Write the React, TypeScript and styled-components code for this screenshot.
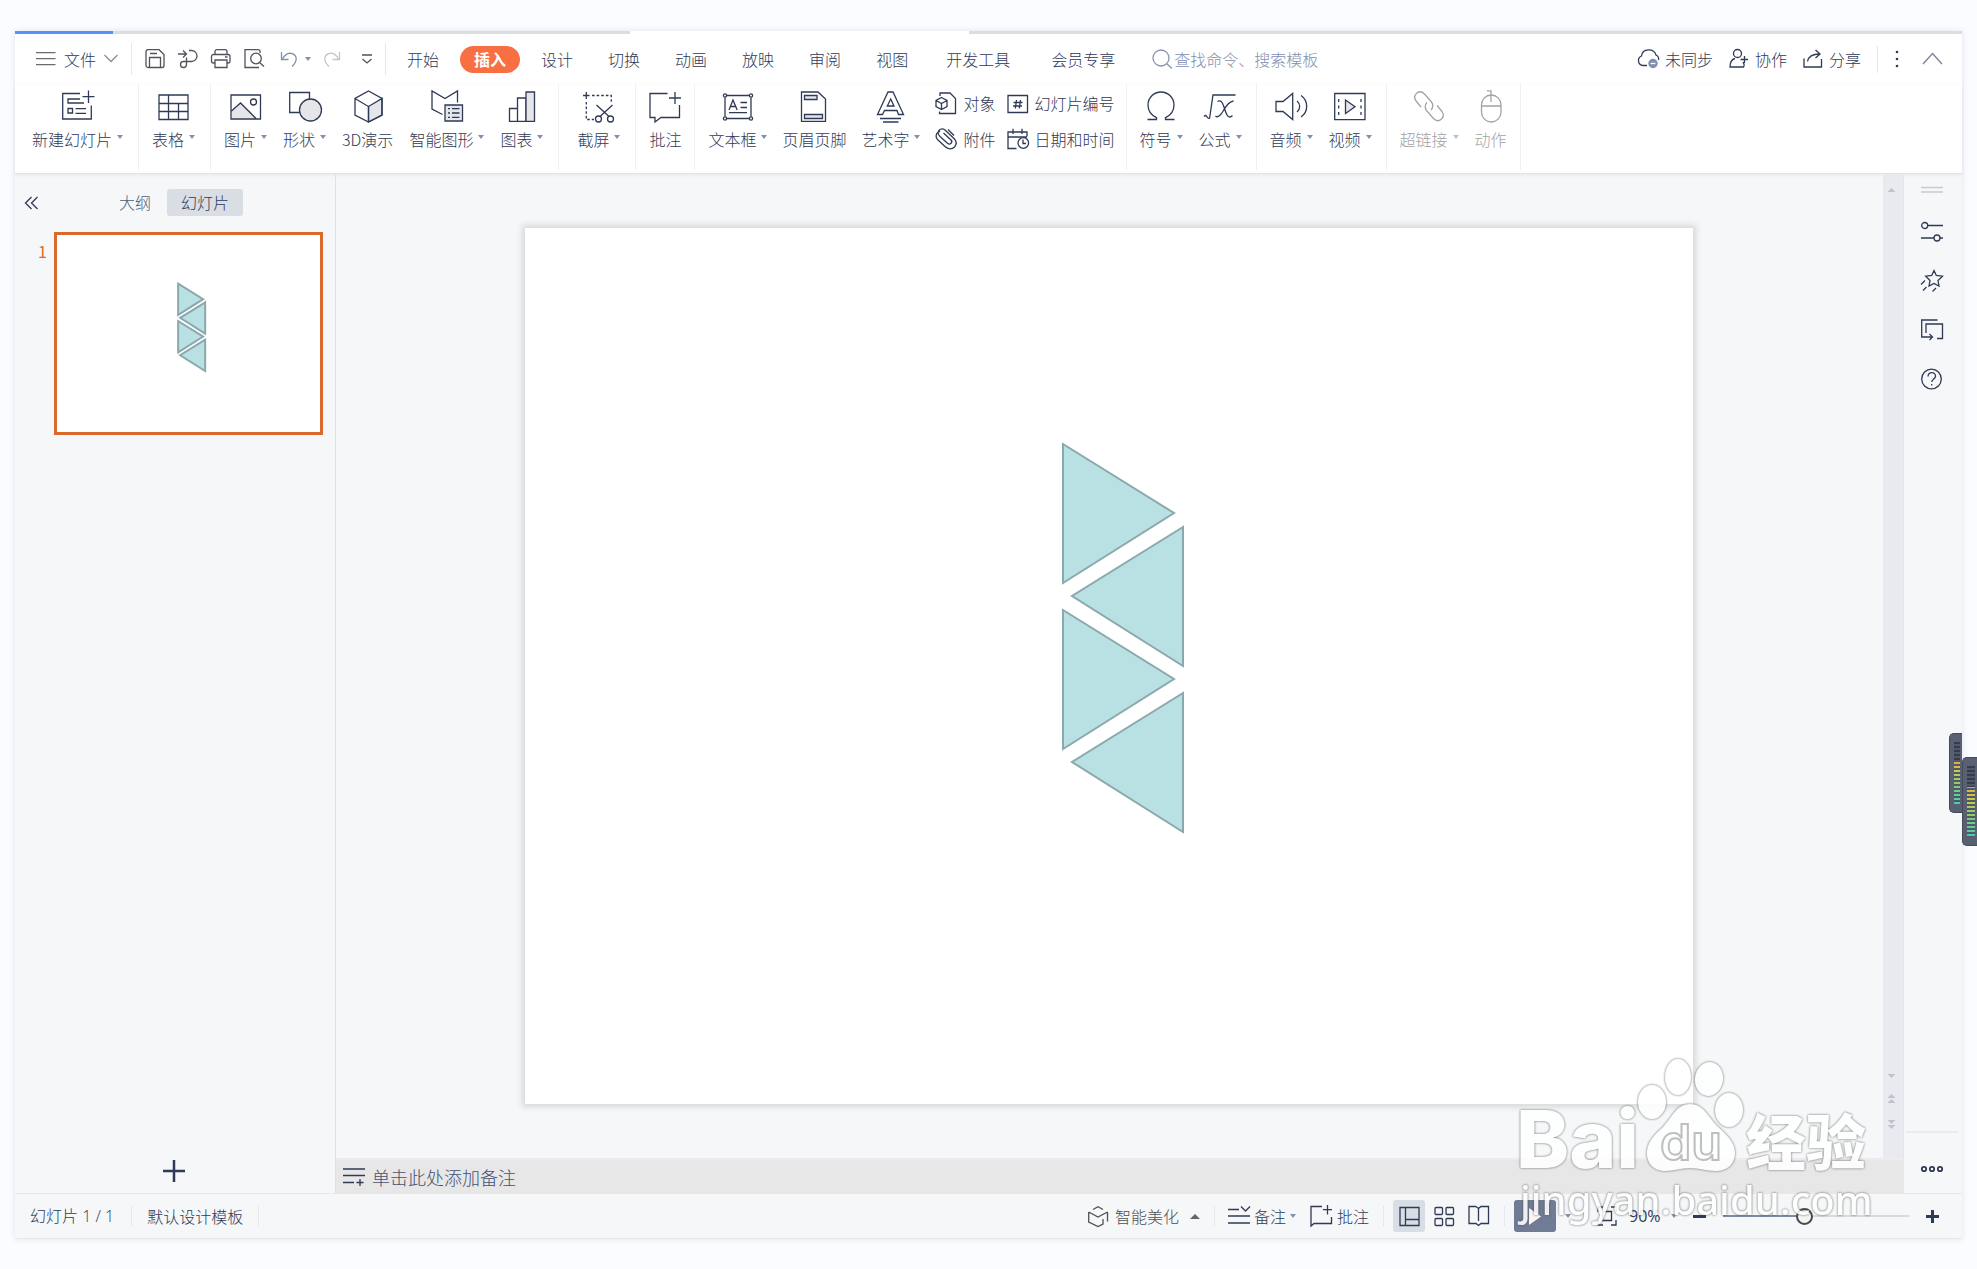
import React from "react";
import styled, { createGlobalStyle, css } from "styled-components";

const ink = "#2f3a56";
const muted = "#8290b0";
const line = "#e6e8ec";
const panel = "#f5f7f9";
const shade = "#e4e6ea";

const GlobalStyle = createGlobalStyle`
  *, *::before, *::after { box-sizing: border-box; }
  body {
    margin: 0;
    background: #fbfcff;
    color: ${ink};
    font: 300 16px/24px "Noto Sans CJK SC", "Open Sans", sans-serif;
  }
  button, input, select, textarea {
    margin: 0;
    padding: 0;
    border: 0;
    background: none;
    color: inherit;
    font: inherit;
  }
  button { cursor: pointer; }
`;

/* ---------- icons ---------- */

const Glyph = styled.svg`
  display: block;
  flex: none;
  overflow: visible;
  fill: none;
  stroke: currentColor;
  stroke-width: 1.3;
`;

const drawings: Record<string, React.ReactNode> = {
  newSlide: (
    <>
      <path d="M18 3.5H.7V29H29.3V15.5M26.5 .5V13M20.5 6.7H32.5" />
      <path d="M18 9H6V13H22M13.5 18.7H24M13.5 23.3H24M6 18.5h4.5v4.5H6z" />
    </>
  ),
  table: <path d="M1 5H30V29.5H1zM1 13.5H30M1 21.5H30M10.5 5V29.5M20.5 13.5V29.5" />,
  picture: (
    <>
      <path d="M1.5 21 10.5 13 26 28.5H1.5z" fill={shade} stroke="none" />
      <path d="M1 5H30.5V29H1zM1.5 21 10.5 13 26 28.5" />
      <circle cx="23.5" cy="12" r="3" />
    </>
  ),
  shapes: (
    <>
      <path d="M.7 2.5H20.5V22.5H.7z" />
      <circle cx="21.5" cy="20" r="11" fill={shade} />
    </>
  ),
  cube: (
    <>
      <path d="M16.5 16.5 30 8.5V25L16.5 32z" fill={shade} />
      <path d="M16.5 1 30 8.5V25L16.5 32 3 25V8.5zM3 8.5 16.5 16.5V32" />
    </>
  ),
  smart: (
    <>
      <path d="M11.5 24.5 1 19V1L14 8.5 26.5 1V12.5" />
      <path d="M14 15H31.5V31H14z" fill={shade} />
      <path d="M17 18.7h2M21 18.7h7.500M17 23h2M21 23h7.500M17 27.300h2M21 27.300h7.500" />
    </>
  ),
  chart: (
    <>
      <path d="M3.500 18.500H11.500V31.300H3.500zM11.500 8H20V31.300H11.500z" />
      <path d="M20 2H28.500V31.300H20z" fill={shade} />
    </>
  ),
  snip: (
    <>
      <path d="M0 5.500H6.500M3.300 2V9" />
      <path d="M9 5.500H28.300V12.500M3.300 12V29.500H11" strokeDasharray="2.600 2" />
      <path d="M13.500 15 26 26.500M29.500 15 17 26.500" />
      <circle cx="15.500" cy="29" r="3" />
      <circle cx="27.500" cy="29" r="3" />
    </>
  ),
  comment: <path d="M18.500 3.500H1V27.500H6V32L12 27.500H30.500V15M26 2V14M20 8H32" />,
  textBox: (
    <>
      <path d="M5 5.500H27M5 28.500H27M3 7.500V26.500M29 7.500V26.500M18.500 12.500H25M18.500 17.500H25M7 22.700H25" />
      <path d="M7 20 11 10 15.200 20M8.500 16.500H13.800" />
      {[[3, 5.5], [29, 5.5], [3, 28.5], [29, 28.5]].map(([x, y]) => (
        <circle key={`${x}-${y}`} cx={x} cy={y} r="1.600" />
      ))}
    </>
  ),
  headerFooter: (
    <>
      <path d="M3.500 2H20L27.500 9V31.300H3.500z" />
      <path d="M6.500 5.500h12.500v4H6.500zM6.500 24.500h18v4H6.500z" fill={shade} />
    </>
  ),
  wordArt: (
    <>
      <path d="M13 2H18L28.500 24.500H23.500L22 20.500H9.500L7.500 24.500H2.500z" />
      <path d="M15.700 9 19 16H12.300zM5 28.500H26M8 32H23.500" />
    </>
  ),
  object: (
    <>
      <path d="M5 4V1H15L20.500 6.500V21.500H4.500V19.500" />
      <path d="M6.500 5.500 12 8.500V14.500L6.500 17.500 1 14.500V8.500zM1 8.500 6.500 11.500 12 8.500M6.500 11.500V17.500" />
    </>
  ),
  attach: (
    <path d="M5 3 1.800 5.500C.500 8 1 10 3 12L10 18.500C13 21.500 17 21.500 19.500 19 22 16 21.500 13 19 10.500L10 2C8 .500 5.500 .700 4 2.500 2.500 4.500 3 6.500 5 8.500L12.500 15.300C13.500 16.300 15 16.300 16 15.300 17 14.300 17 13 16 12L8.500 5M13 1.500 19 7.500" />
  ),
  number: (
    <path d="M1 3.500H20.500V20.500H1zM9.500 8 8.300 16.500M13.500 8 12.300 16.500M6.500 10.500H15.500M6 14H15" />
  ),
  calendar: (
    <>
      <path d="M9.500 20.500H1V4H20V8.500M1 9H20M6 .700V6M15 .700V6" />
      <circle cx="16.300" cy="15" r="5.300" />
      <path d="M16 11.500V15.500H19" />
    </>
  ),
  omega: (
    <path d="M2.500 29.500H11.500V27.700C6 25 3 21 3 15A13 13 0 0 1 29 15C29 21 26 25 20.500 27.700V29.500H29.500" />
  ),
  formula: (
    <path d="M0 26.500C1.500 25 2 25 3.500 27.500 4.500 29 5.500 28.500 5.700 27.500L9 5H31.500M13.500 11.500C17 9.500 18.500 12 20.500 18.500S24.500 29.500 28.500 25.500M29.500 11C24 12 21.500 17 19.500 20.500S14 28.500 11.500 26" />
  ),
  audio: (
    <path d="M1 11.500H8L17.700 3.500V29.500L8 21.500H1zM22 11A7 7 0 0 1 22 22M26 5.500A13 13 0 0 1 26 27" />
  ),
  video: (
    <>
      <path d="M.700 3.500H31V29.700H.700zM4.700 9v3M4.700 15.500v3M4.700 22v3M27 9v3M27 15.500v3M27 22v3" />
      <path d="M11.500 10 21 16.700 11.500 23.500z" fill={shade} />
    </>
  ),
  link: (
    <>
      <path d="M8 17 3 11C1 8 1.500 5 4 3 6.500 1 9.500 2 11.500 4L18.500 12C20.500 14.500 20 18 18 20" />
      <path d="M24 15.500 29 21.500C31 24.500 30.500 27.500 28 29.500 25.500 31.500 22.500 30.500 20.500 28.500L13.500 20.500C11.500 18 12 14.500 14 12.500" />
    </>
  ),
  mouse: (
    <>
      <rect x="6.500" y="5" width="19.500" height="27" rx="9.750" />
      <path d="M6.500 16H26M12 .800H16V12" />
    </>
  ),
  menu: <path d="M0 3.700H19.500M0 9.700H19.500M0 15.700H19.500" stroke="#6b6b6b" />,
  chevronDown: <path d="M.500 3 7 9.500 13.500 3" stroke="#8c8c8c" />,
  save: (
    <path d="M3 .700H14L19 5.500V16.500A2 2 0 0 1 17 18.500H3A2 2 0 0 1 1 16.500V2.700A2 2 0 0 1 3 .700zM4.500 18V8.500H15.500V18M5 4.500H12" />
  ),
  exportFile: (
    <path d="M0 5H8M5 1.500 8.500 5 5 8.500M11 1.500H13.500A5.500 5.500 0 0 1 13.500 12.500H5.500A3 3 0 1 0 8.500 15.500V8.500" />
  ),
  print: (
    <path d="M4 5.500V2.700A2 2 0 0 1 6 .700H14A2 2 0 0 1 16 2.700V5.500M4 14H2.500A2 2 0 0 1 .500 12V7.500A2 2 0 0 1 2.500 5.500H17A2 2 0 0 1 19 7.500V12A2 2 0 0 1 17 14H16M4 11H16V18.500H4zM14 8H16.500" />
  ),
  preview: (
    <>
      <path d="M16 4V2.500A1.800 1.800 0 0 0 14.200 .700H1V18.500H15" />
      <circle cx="12" cy="9.500" r="5.300" />
      <path d="M15.500 13.500 20 17.500" />
    </>
  ),
  undo: <path d="M1.500 3V10.500H8.500M2 10.500C5 5 9 3.500 12.500 4.700 17.500 7 17.500 12.500 12 17.500" />,
  redo: <path d="M15.500 3V10.500H8.500M15 10.500C12 5 8 3.500 4.500 4.700-.500 7-.500 12.500 5 17.500" />,
  more: <path d="M0 6H10M.500 10 5 14 9.500 10" />,
  search: (
    <>
      <circle cx="9" cy="9" r="8" />
      <path d="M14.500 14.500 20 19.500" />
    </>
  ),
  cloud: (
    <>
      <path d="M10 16.500H5.500A5 5 0 0 1 4.500 7C5.500 -1 17 -1 19 6 21 7 22 9 21.500 11" />
      <circle cx="16" cy="14.500" r="4.700" fill={muted} stroke="none" />
      <path d="M13.700 14.500H18.300" stroke="#fff" />
    </>
  ),
  person: (
    <>
      <circle cx="8.500" cy="4.500" r="4" />
      <path d="M6 9.500C2 10.500 1 13 1 18H14.500C15.500 16.500 15 14.500 14 13M11.500 10.500H19M15.500 7V14" />
    </>
  ),
  share: <path d="M1 9.500V18H18.500V10M4.500 12.500C5.500 7 9 5 16.500 5M12.500 1 17 5 12.500 9" />,
  dots: (
    <g fill="currentColor" stroke="none">
      <circle cx="3" cy="2" r="1.300" />
      <circle cx="3" cy="9" r="1.300" />
      <circle cx="3" cy="16" r="1.300" />
    </g>
  ),
  chevronUp: <path d="M1 15 10.500 4.500 20 15" stroke="#7a8296" />,
  collapse: <path d="M7.500 1 1.500 7 7.500 13M13.500 1 7.500 7 13.500 13" />,
  plus: <path d="M11 0V22M0 11H22" strokeWidth="2.500" />,
  notes: <path d="M0 2H22M0 8.500H22M0 15.500H11M13.500 15.500H20.500M17 12V19" />,
  grip: <path d="M0 8.500H22M0 13H22" stroke="#c9cbd0" />,
  tune: (
    <>
      <path d="M7 4.500H22M0 17H13M19 17H22" />
      <circle cx="3.700" cy="4.500" r="3" />
      <circle cx="16" cy="17" r="3" />
    </>
  ),
  star: (
    <path d="M13 .500 15.300 5.500 21.500 6.200 17 10.500 18 16 13 13.500 8 16 9 10.500 4.700 6.200 10.700 5.500zM4 10.500 0 14.500M5.500 17 2 20.500M15 18 11.500 21.500" />
  ),
  swap: <path d="M16.500 1H.700V18H11M8.500 15 11.500 18 8.500 21M5 14V5H21.500V19.500H16" />,
  help: (
    <>
      <circle cx="10.500" cy="11" r="9.800" />
      <path d="M7 8.500C7 3 15 3.500 14.500 8.500 14 11 11 11 10.700 14M10.700 16V17.500" />
    </>
  ),
  ellipsis: (
    <>
      <circle cx="3" cy="11" r="2.200" strokeWidth="1.800" />
      <circle cx="11" cy="11" r="2.200" strokeWidth="1.800" />
      <circle cx="19" cy="11" r="2.200" strokeWidth="1.800" />
    </>
  ),
  beautify: (
    <path d="M5 3.500 10 .700 15 3.500M.700 6 10 11 19.500 6M.700 6V16L10 20.500 15 18V13M19.500 6V15.500" />
  ),
  notesToggle: <path d="M0 4.500H11M13 1.500 17.500 6 22 1.500M0 11H22M0 18H22" />,
  reviewNote: <path d="M12 1.500H1V21L4 18.500H21.500V12M17.500 0V9.500M13 4.700H22" />,
  viewNormal: <path d="M1 1.500H20V19.500H1zM6.500 1.500V19.500M6.500 13.500H20" />,
  viewGrid: (
    <>
      {[1, 12].map((x) =>
        [1.5, 12.5].map((y) => <rect key={`${x}-${y}`} x={x} y={y} width="7.500" height="7" rx="1" />)
      )}
    </>
  ),
  viewRead: <path d="M8 1.500H1V18.500H8L10.500 20.500 13 18.500H20.500V1.500H13L10.500 3.500 8 1.500M10.500 3.500V16" />,
  play: <path d="M1 1 13 9.500 1 18z" fill="#fdf6f3" stroke="none" />,
  fit: <path d="M1 6V1H6M14 1H19V6M19 14V19H14M6 19H1V14M5.500 5.500H14.500V14.500H5.500z" />,
  minus: <path d="M0 6.500H13" strokeWidth="3" />,
  zoomIn: <path d="M0 6.500H13M6.500 0V13" strokeWidth="3" />,
};

function Icon({ name, w, h = w }: { name: string; w: number; h?: number }) {
  return (
    <Glyph width={w} height={h} viewBox={`0 0 ${w} ${h}`} aria-hidden="true">
      {drawings[name]}
    </Glyph>
  );
}

/* ---------- shared parts ---------- */

const Caret = styled.span<{ $up?: boolean; $tone?: string }>`
  flex: none;
  width: 0;
  height: 0;
  border: 3px solid transparent;
  ${(p) =>
    p.$up
      ? css`margin-left: 4px; border-width: 5px; border-top: 0; border-bottom-color: ${p.$tone ?? muted};`
      : css`border-bottom: 0; border-top: 4px solid ${p.$tone ?? muted};`}
`;

const Rule = styled.span<{ $h: number }>`
  flex: none;
  width: 1px;
  height: ${(p) => p.$h}px;
  background: ${line};
`;

const Page = styled.div`
  position: relative;
  display: flex;
  min-height: 100vh;
  padding: 31px 15px 30px;
  overflow: hidden;
`;

const Window = styled.div`
  flex: 1;
  min-width: 0;
  display: flex;
  flex-direction: column;
  background: ${panel};
  border-bottom: 1px solid ${line};
  box-shadow: 0 0 6px rgba(40, 50, 80, 0.12);
`;

const TabStrip = styled.div`
  display: grid;
  grid-template-columns: 98fr 517fr 339fr 993fr;
  height: 3px;
`;

const StripPart = styled.span<{ $tone: string }>`
  background: ${(p) => p.$tone};
`;

/* ---------- menu bar ---------- */

const MenuBar = styled.header`
  display: flex;
  align-items: center;
  height: 50px;
  padding: 0 20px 0 21px;
  background: #fff;
`;

const FileButton = styled.button`
  display: flex;
  align-items: center;
  gap: 8px;
  margin-right: 13px;
`;

const QuickTools = styled.div`
  display: flex;
  align-items: center;
  gap: 13px;
  padding: 0 13px;
  color: #50535a;
`;

const QuickButton = styled.button<{ $tone?: string }>`
  display: flex;
  align-items: center;
  gap: 7px;
  color: ${(p) => p.$tone ?? "inherit"};
`;

const UndoButton = styled(QuickButton)`
  margin-left: 3px;
`;

const MoreButton = styled(QuickButton)`
  margin-left: 8px;
`;

const Tabs = styled.nav`
  display: flex;
  gap: 7px;
  padding-left: 7px;
`;

const Tab = styled.button<{ $active?: boolean; $wide?: boolean }>`
  height: 27px;
  padding: 0 ${(p) => (p.$wide ? 17 : 14)}px;
  border-radius: 14px;
  line-height: 27px;
  white-space: nowrap;
  ${(p) => p.$active && css`background: #f76f43; color: #fff; font-weight: 700;`}
`;

const Search = styled.label`
  display: flex;
  align-items: center;
  gap: 2px;
  margin-left: 20px;
  color: #8794b1;
`;

const SearchInput = styled.input`
  width: 180px;
  outline: 0;
  &::placeholder { color: #8290b0; opacity: 1; }
`;

const Account = styled.div`
  display: flex;
  align-items: center;
  gap: 16px;
  margin-left: auto;
`;

const AccountButton = styled.button`
  display: flex;
  align-items: center;
  gap: 6px;
  white-space: nowrap;
`;

const CollapseRibbon = styled(AccountButton)`
  margin-left: 6px;
`;

/* ---------- ribbon ---------- */

const Ribbon = styled.div`
  display: flex;
  padding: 0 0 3px 4px;
  background: #fff;
  border-bottom: 1px solid #e2e4e7;
  box-shadow: 0 1px 3px rgba(40, 50, 80, 0.08);
`;

const Group = styled.div<{ $lead?: number; $tail?: number; $gap?: number }>`
  display: flex;
  gap: ${(p) => p.$gap ?? 16}px;
  height: 86px;
  padding: 6px ${(p) => p.$tail ?? 15}px 0 ${(p) => p.$lead ?? 13}px;
  border-right: 1px solid #eff0f2;
`;

const Tool = styled.button`
  display: flex;
  flex-direction: column;
  align-items: center;
  gap: 5px;
  height: 61px;
  white-space: nowrap;
  &:disabled { color: #a3a3a3; }
`;

const ToolLabel = styled.span`
  display: flex;
  align-items: center;
  gap: 5px;
  ${Caret} { margin-bottom: 4px; }
`;

const SmallTools = styled.div`
  display: grid;
  grid-template-columns: auto auto;
  column-gap: 11px;
  row-gap: 12px;
  align-content: start;
  padding-top: 1px;
`;

const SmallTool = styled.button`
  display: flex;
  align-items: center;
  gap: 6px;
  white-space: nowrap;
`;

/* ---------- body ---------- */

const Body = styled.div`
  flex: 1;
  display: flex;
  min-height: 0;
`;

const Outline = styled.aside`
  flex: none;
  display: flex;
  flex-direction: column;
  width: 321px;
  border-right: 1px solid #dfe2e6;
`;

const OutlineHead = styled.div`
  display: flex;
  align-items: center;
  gap: 16px;
  padding: 15px 9px 16px;
`;

const OutlineTab = styled.button<{ $active?: boolean }>`
  height: 27px;
  border-radius: 3px;
  line-height: 27px;
  ${(p) => (p.$active ? css`padding: 0 14px; background: #d9dee5;` : css`margin-left: 65px; color: #4f5b76;`)}
`;

const ThumbRow = styled.button`
  display: grid;
  grid-template-columns: 10px 1fr;
  column-gap: 6px;
  padding: 0 12px 0 23px;
  text-align: left;
`;

const ThumbNumber = styled.span`
  padding-top: 7px;
  color: #e06b20;
  font-weight: 400;
`;

const Thumb = styled.span`
  display: block;
  box-sizing: content-box;
  aspect-ratio: 4 / 3;
  background: #fff;
  border: 3px solid #d96a2b;
`;

const AddSlide = styled.button`
  margin: auto auto 11px 148px;
`;

const Editor = styled.main`
  flex: 1;
  min-width: 0;
  display: flex;
  flex-direction: column;
`;

const Stage = styled.div`
  flex: 1;
  display: flex;
`;

const Canvas = styled.div`
  flex: 1;
  display: flex;
  align-items: center;
  padding: 24px 190px 24px 189px;
`;

const Slide = styled.div`
  flex: 1;
  aspect-ratio: 4 / 3;
  background: #fff;
  box-shadow: 0 0 6px 3px rgba(60, 60, 60, 0.16);
`;

const Drawing = styled.svg`
  display: block;
  width: 100%;
  height: 100%;
  fill: #b9e0e2;
  stroke: #8aa9ac;
  stroke-width: 2;
`;

const ScrollTrack = styled.div`
  flex: none;
  display: flex;
  flex-direction: column;
  align-items: center;
  width: 21px;
  padding: 14px 3px 29px 0;
  background: #e8eaef;
  border-right: 1px solid #e3e5ea;
`;

const ScrollButton = styled.button<{ $last?: boolean }>`
  display: flex;
  flex-direction: column;
  gap: 1px;
  ${(p) => p.$last && css`margin-top: auto;`}
`;

const ScrollPages = styled.div`
  display: flex;
  flex-direction: column;
  gap: 17px;
  margin-top: 16px;
`;

const Arrow = styled.span<{ $up?: boolean }>`
  width: 8px;
  height: 4px;
  background: #c0c3ca;
  clip-path: ${(p) => (p.$up ? "polygon(50% 0, 100% 100%, 0 100%)" : "polygon(0 0, 100% 0, 50% 100%)")};
`;

const Notes = styled.label`
  display: flex;
  align-items: center;
  gap: 7px;
  height: 35px;
  padding: 0 7px;
  background: #e7e7e7;
  border-top: 2px solid #ebecef;
`;

const NotesInput = styled.input`
  flex: 1;
  height: 30px;
  font-size: 18px;
  outline: 0;
  &::placeholder { color: #46526f; opacity: 1; }
`;

const SideBar = styled.aside`
  flex: none;
  display: flex;
  flex-direction: column;
  align-items: center;
  width: 58px;
  padding: 5px 4px 0 2px;
`;

const SideButton = styled.button`
  display: grid;
  place-items: center;
  width: 40px;
  height: 49px;
`;

const GripButton = styled(SideButton)`
  height: 22px;
  margin-bottom: 6px;
`;

const SideFoot = styled.div`
  display: grid;
  place-items: center;
  align-self: stretch;
  height: 62px;
  margin-top: auto;
  padding-top: 11px;
  border-top: 2px solid #e9ebee;
`;

/* ---------- status bar ---------- */

const StatusBar = styled.footer`
  display: flex;
  align-items: center;
  justify-content: space-between;
  height: 45px;
  padding: 0 23px 0 15px;
  border-top: 1px solid ${line};
`;

const StatusGroup = styled.div`
  display: flex;
  align-items: center;
  gap: 15px;
  white-space: nowrap;
`;

const Latin = styled.span`
  margin-right: 2px;
  font-family: "Open Sans", "Noto Sans CJK SC", sans-serif;
`;

const StatusTools = styled(StatusGroup)`
  gap: 9px;
`;

const StatusButton = styled.button<{ $tone?: string; $gap?: number; $tail?: number }>`
  display: flex;
  align-items: center;
  gap: ${(p) => p.$gap ?? 4}px;
  padding: 0 ${(p) => p.$tail ?? 5}px 0 4px;
  color: ${(p) => p.$tone ?? ink};
`;

const ViewButton = styled.button<{ $active?: boolean }>`
  display: grid;
  place-items: center;
  width: 32px;
  height: 32px;
  border-radius: 3px;
  background: ${(p) => (p.$active ? "#d9dee5" : "transparent")};
`;

const Views = styled.div`
  display: flex;
  gap: 3px;
`;

const PlayButton = styled.button`
  display: grid;
  place-items: center;
  width: 42px;
  height: 32px;
  border-radius: 3px;
  background: #707b95;
`;

const PlayMenu = styled.button`
  display: flex;
  width: 19px;
`;

const ZoomSelect = styled.select`
  appearance: none;
  width: 42px;
  font-family: "Open Sans", sans-serif;
  font-weight: 400;
`;

const ZoomBox = styled.div`
  display: flex;
  align-items: center;
  margin-right: 7px;
`;

const ZoomSlider = styled.input`
  appearance: none;
  width: 186px;
  height: 20px;
  margin: 0 8px;
  background: linear-gradient(90deg, #7f8ba6 43%, #d5d9e0 43%) center / 100% 2px no-repeat;
  &::-webkit-slider-thumb {
    appearance: none;
    width: 17px;
    height: 17px;
    border: 2px solid #4a4a4a;
    border-radius: 50%;
    background: #f5f5f5;
  }
`;

/* ---------- overlays ---------- */

const Meter = styled.div<{ $right: number; $top: number; $w: number; $h: number }>`
  position: absolute;
  right: ${(p) => p.$right}px;
  top: ${(p) => p.$top}px;
  width: ${(p) => p.$w}px;
  height: ${(p) => p.$h}px;
  padding: 8px 2px 8px 4px;
  border: 1px solid #444a58;
  border-right: 0;
  border-radius: 5px 0 0 5px;
  background: #596072;
`;

const Levels = styled.div`
  height: 100%;
  background:
    repeating-linear-gradient(transparent 0 2px, #50596a 2px 4px),
    linear-gradient(#363c4b 30%, #e0a545 30%, #cfc850 45%, #8ccb74 68%, #45cdb4);
`;

const Watermark = styled.svg`
  position: absolute;
  right: 87px;
  bottom: 19px;
  pointer-events: none;
  fill: #fff;
  opacity: 0.88;
  filter: drop-shadow(0 0 1px rgba(70, 70, 70, 0.6)) drop-shadow(0 0 1px rgba(70, 70, 70, 0.35));
`;

const WordMark = styled.text`
  font: 800 80px "Inter", sans-serif;
`;

const PawText = styled.text`
  font: 600 50px "Inter", sans-serif;
  fill: #fff;
  stroke: #b8b8b8;
  stroke-width: 2;
`;

const HanMark = styled.text`
  font: 900 60px "Noto Sans CJK SC", sans-serif;
`;

const SiteText = styled.text`
  font: 500 40px "Noto Sans", sans-serif;
`;

/* ---------- data ---------- */

type ToolInfo = { icon: string; label: string; menu?: boolean; disabled?: boolean };
type GroupInfo = { tools: ToolInfo[]; lead?: number; tail?: number; gap?: number; extras?: boolean };

const groups: GroupInfo[] = [
  { tools: [{ icon: "newSlide", label: "新建幻灯片", menu: true }] },
  { tools: [{ icon: "table", label: "表格", menu: true }] },
  {
    tools: [
      { icon: "picture", label: "图片", menu: true },
      { icon: "shapes", label: "形状", menu: true },
      { icon: "cube", label: "3D演示" },
      { icon: "smart", label: "智能图形", menu: true },
      { icon: "chart", label: "图表", menu: true },
    ],
  },
  { lead: 18, tools: [{ icon: "snip", label: "截屏", menu: true }] },
  { tail: 13, tools: [{ icon: "comment", label: "批注" }] },
  {
    gap: 15,
    tail: 11,
    extras: true,
    tools: [
      { icon: "textBox", label: "文本框", menu: true },
      { icon: "headerFooter", label: "页眉页脚" },
      { icon: "wordArt", label: "艺术字", menu: true },
    ],
  },
  {
    tail: 14,
    tools: [
      { icon: "omega", label: "符号", menu: true },
      { icon: "formula", label: "公式", menu: true },
    ],
  },
  {
    tail: 14,
    tools: [
      { icon: "audio", label: "音频", menu: true },
      { icon: "video", label: "视频", menu: true },
    ],
  },
  {
    tail: 13,
    tools: [
      { icon: "link", label: "超链接", menu: true, disabled: true },
      { icon: "mouse", label: "动作", disabled: true },
    ],
  },
];

const smallTools = [
  ["object", "对象"],
  ["number", "幻灯片编号"],
  ["attach", "附件"],
  ["calendar", "日期和时间"],
];

const tabs = ["开始", "插入", "设计", "切换", "动画", "放映", "审阅", "视图", "开发工具", "会员专享"];

const sidePanels = [
  ["tune", "属性"],
  ["star", "动画"],
  ["swap", "切换"],
  ["help", "帮助"],
];

const triangles = [
  "538,216 649,285 538,355",
  "658,299 547,368 658,438",
  "538,382 649,451 538,521",
  "658,465 547,534 658,604",
];

function Triangles() {
  return (
    <Drawing viewBox="0 0 1168 876" aria-hidden="true">
      {triangles.map((points) => (
        <polygon key={points} points={points} vectorEffect="non-scaling-stroke" />
      ))}
    </Drawing>
  );
}

function RibbonTool({ icon, label, menu, disabled }: ToolInfo) {
  return (
    <Tool disabled={disabled}>
      <Icon name={icon} w={32} />
      <ToolLabel>
        {label}
        {menu && <Caret $tone={disabled ? "#b9c0d0" : undefined} />}
      </ToolLabel>
    </Tool>
  );
}

export default function App() {
  return (
    <Page>
      <GlobalStyle />
      <Window>
        <TabStrip>
          <StripPart $tone="#5b8ff9" />
          <StripPart $tone="#dcdddf" />
          <StripPart $tone="#fff" />
          <StripPart $tone="#dcdddf" />
        </TabStrip>

        <MenuBar>
          <FileButton>
            <Icon name="menu" w={20} />
            文件
            <Icon name="chevronDown" w={14} />
          </FileButton>
          <Rule $h={32} />
          <QuickTools>
            <QuickButton aria-label="保存"><Icon name="save" w={20} /></QuickButton>
            <QuickButton aria-label="输出"><Icon name="exportFile" w={20} /></QuickButton>
            <QuickButton aria-label="打印"><Icon name="print" w={20} /></QuickButton>
            <QuickButton aria-label="打印预览"><Icon name="preview" w={20} /></QuickButton>
            <UndoButton aria-label="撤销" $tone={muted}>
              <Icon name="undo" w={18} h={20} />
              <Caret />
            </UndoButton>
            <QuickButton aria-label="恢复" $tone="#c3c5c9"><Icon name="redo" w={17} h={20} /></QuickButton>
            <MoreButton aria-label="更多"><Icon name="more" w={10} h={20} /></MoreButton>
          </QuickTools>
          <Rule $h={32} />
          <Tabs>
            {tabs.map((t) => (
              <Tab key={t} $active={t === "插入"} $wide={t.length > 2}>{t}</Tab>
            ))}
          </Tabs>
          <Search>
            <Icon name="search" w={20} />
            <SearchInput type="text" aria-label="查找" placeholder="查找命令、搜索模板" />
          </Search>
          <Account>
            <AccountButton><Icon name="cloud" w={22} h={20} />未同步</AccountButton>
            <AccountButton><Icon name="person" w={20} />协作</AccountButton>
            <AccountButton><Icon name="share" w={20} />分享</AccountButton>
            <Rule $h={27} />
            <AccountButton aria-label="更多选项"><Icon name="dots" w={6} h={18} /></AccountButton>
            <CollapseRibbon aria-label="收起功能区"><Icon name="chevronUp" w={20} /></CollapseRibbon>
          </Account>
        </MenuBar>

        <Ribbon>
          {groups.map(({ tools, lead, tail, gap, extras }) => (
            <Group key={tools[0].label} $lead={lead} $tail={tail} $gap={gap}>
              {tools.map((t) => <RibbonTool key={t.label} {...t} />)}
              {extras && (
                <SmallTools>
                  {smallTools.map(([icon, label]) => (
                    <SmallTool key={label}><Icon name={icon} w={22} />{label}</SmallTool>
                  ))}
                </SmallTools>
              )}
            </Group>
          ))}
        </Ribbon>

        <Body>
          <Outline>
            <OutlineHead>
              <button aria-label="收起"><Icon name="collapse" w={14} /></button>
              <OutlineTab>大纲</OutlineTab>
              <OutlineTab $active>幻灯片</OutlineTab>
            </OutlineHead>
            <ThumbRow>
              <ThumbNumber>1</ThumbNumber>
              <Thumb><Triangles /></Thumb>
            </ThumbRow>
            <AddSlide aria-label="新建幻灯片"><Icon name="plus" w={22} /></AddSlide>
          </Outline>

          <Editor>
            <Stage>
              <Canvas>
                <Slide><Triangles /></Slide>
              </Canvas>
              <ScrollTrack>
                <ScrollButton aria-label="向上"><Arrow $up /></ScrollButton>
                <ScrollButton aria-label="向下" $last><Arrow /></ScrollButton>
                <ScrollPages>
                  <ScrollButton aria-label="上一页"><Arrow $up /><Arrow $up /></ScrollButton>
                  <ScrollButton aria-label="下一页"><Arrow /><Arrow /></ScrollButton>
                </ScrollPages>
              </ScrollTrack>
            </Stage>
            <Notes>
              <Icon name="notes" w={22} h={19} />
              <NotesInput type="text" aria-label="备注" placeholder="单击此处添加备注" />
            </Notes>
          </Editor>

          <SideBar>
            <GripButton aria-label="拖动"><Icon name="grip" w={22} /></GripButton>
            {sidePanels.map(([name, title]) => (
              <SideButton key={name} aria-label={title}><Icon name={name} w={22} /></SideButton>
            ))}
            <SideFoot>
              <button aria-label="更多面板"><Icon name="ellipsis" w={22} /></button>
            </SideFoot>
          </SideBar>
        </Body>

        <StatusBar>
          <StatusGroup>
            <Latin>幻灯片 1 / 1</Latin>
            <Rule $h={20} />
            <span>默认设计模板</span>
            <Rule $h={20} />
          </StatusGroup>
          <StatusTools>
            <StatusButton $tone="#505050" $gap={7}>
              <Icon name="beautify" w={20} h={21} />智能美化<Caret $up $tone="#666" />
            </StatusButton>
            <Rule $h={20} />
            <StatusButton $tail={1}>
              <Icon name="notesToggle" w={22} />备注<Caret />
            </StatusButton>
            <StatusButton $gap={5}>
              <Icon name="reviewNote" w={22} />批注
            </StatusButton>
            <Rule $h={20} />
            <Views>
              <ViewButton $active aria-label="普通视图"><Icon name="viewNormal" w={21} /></ViewButton>
              <ViewButton aria-label="幻灯片浏览"><Icon name="viewGrid" w={21} /></ViewButton>
              <ViewButton aria-label="阅读视图"><Icon name="viewRead" w={22} /></ViewButton>
            </Views>
            <Rule $h={20} />
            <PlayButton aria-label="放映"><Icon name="play" w={14} h={19} /></PlayButton>
            <PlayMenu aria-label="放映选项"><Caret /></PlayMenu>
            <StatusButton aria-label="适应窗口" $tail={3}><Icon name="fit" w={20} /></StatusButton>
            <ZoomBox>
              <ZoomSelect aria-label="缩放" defaultValue="90"><option value="90">90%</option></ZoomSelect>
              <Caret />
            </ZoomBox>
            <button aria-label="缩小"><Icon name="minus" w={13} /></button>
            <ZoomSlider type="range" aria-label="缩放比例" min={0} max={100} defaultValue={43} />
            <button aria-label="放大"><Icon name="zoomIn" w={13} /></button>
          </StatusTools>
        </StatusBar>
      </Window>

      <Meter $right={15} $top={733} $w={13} $h={80}><Levels /></Meter>
      <Meter $right={0} $top={757} $w={15} $h={89}><Levels /></Meter>

      <Watermark width="380" height="200" viewBox="0 0 380 200">
        <WordMark x="6" y="118">Bai</WordMark>
        <ellipse cx="142" cy="52" rx="14" ry="17" />
        <ellipse cx="168" cy="27" rx="13" ry="18" />
        <ellipse cx="199" cy="29" rx="14" ry="17" transform="rotate(8 199 29)" />
        <ellipse cx="219" cy="60" rx="14" ry="17" />
        <path d="M180 54C193 54 198 66 207 76 216 84 225 92 225 103 225 114 217 121 206 121 195 121 190 118 180 118S165 121 155 121C143 121 136 112 137 101 138 90 147 83 154 76 162 67 167 54 180 54z" />
        <PawText x="150" y="110">du</PawText>
        <HanMark x="236" y="115">经验</HanMark>
        <SiteText x="10" y="165">jingyan.baidu.com</SiteText>
      </Watermark>
    </Page>
  );
}
